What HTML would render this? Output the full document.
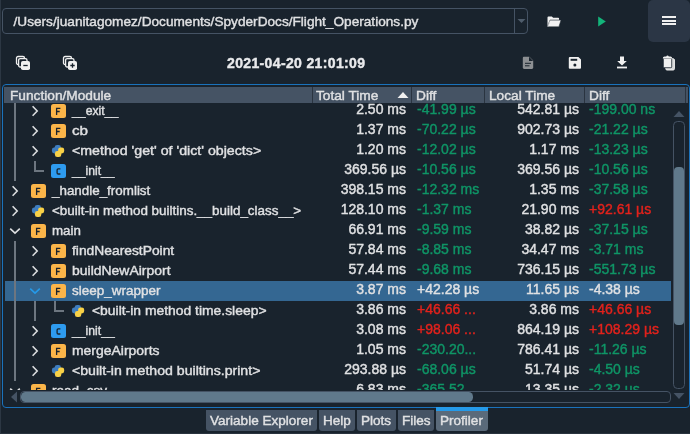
<!DOCTYPE html>
<html><head><meta charset="utf-8">
<style>
html,body{margin:0;padding:0;}
body{width:690px;height:434px;overflow:hidden;background:#19232d;position:relative;font-family:"Liberation Sans",sans-serif;color:#e0e1e3;will-change:transform;-webkit-text-stroke:0.4px currentColor;}
.a{position:absolute;}
.ic{position:absolute;}
.ib{position:absolute;width:15px;height:14px;border-radius:2.5px;}
.ib svg{position:absolute;left:0;top:0;}
.t{position:absolute;height:20px;line-height:16px;white-space:nowrap;font-size:13.4px;}
.num{font-size:14px;}
.gr{color:#0f9566;}
.rd{color:#e2221c;}
.wh{color:#e0e1e3;}
.tl{position:absolute;background:#6d7680;}
.sel{position:absolute;left:5px;width:666px;height:20px;background:#346792;}
#body{position:absolute;left:4px;top:103px;width:667px;height:287px;overflow:hidden;}
#inner{position:absolute;left:-4px;top:-103px;width:690px;height:434px;}
.hd{position:absolute;top:87px;height:16px;background:#455364;}
.hsep{position:absolute;top:87px;width:1px;height:16px;background:#2a3440;}
.ht{position:absolute;top:88px;line-height:16px;font-size:13.7px;color:#e0e1e3;white-space:nowrap;}
.tab{position:absolute;top:410px;height:20.5px;background:#455364;border-radius:0 0 3px 3px;font-size:13.55px;line-height:21px;color:#e0e1e3;white-space:nowrap;}
</style></head>
<body>
<!-- left strip -->
<div class="a" style="left:0;top:0;width:1px;height:434px;background:#2c3743"></div>

<!-- path combobox -->
<div class="a" style="left:2px;top:8px;width:524px;height:24px;border:1px solid #455364;border-radius:4px;"></div>
<div class="a" style="left:514px;top:9px;width:1px;height:24px;background:#455364"></div>
<svg class="ic" style="left:517px;top:18px" width="9" height="6" viewBox="0 0 9 6"><path d="M0.5 1 H8.5 L4.5 5Z" fill="#4f5d6c"/></svg>
<div class="a" style="left:13.5px;top:13px;font-size:13.65px;line-height:18px;white-space:nowrap;color:#e0e1e3">/Users/juanitagomez/Documents/SpyderDocs/Flight_Operations.py</div>

<!-- folder icon -->
<svg class="ic" style="left:546.3px;top:14.6px" width="16" height="13" viewBox="0 0 16 13">
<path d="M1.5 2.4 Q1.5 1.4 2.5 1.4 H5.8 L7.2 2.8 H12.2 Q13.1 2.8 13.1 3.7 V11.7 H2.5 Q1.5 11.7 1.5 10.7Z" fill="#f2f2f2"/>
<path d="M4 5.1 H15.1 L12.9 11.7 H1.5Z" fill="#f2f2f2" stroke="#19232d" stroke-width="0.6" stroke-linejoin="round"/>
<path d="M1.9 11.7 L4.2 5.6" stroke="#f2f2f2" stroke-width="0.6"/>
</svg>
<!-- play icon -->
<svg class="ic" style="left:597px;top:16px" width="10" height="11" viewBox="0 0 10 11"><path d="M1.2 0.5 L8.8 5.5 L1.2 10.5Z" fill="#13b47a"/></svg>
<!-- menu button -->
<div class="a" style="left:648px;top:0px;width:41.5px;height:42px;background:#2b3645;border-radius:5px"></div>
<div class="a" style="left:662px;top:16px;width:14px;height:2px;background:#f0f0f0"></div>
<div class="a" style="left:662px;top:19.5px;width:14px;height:2px;background:#f0f0f0"></div>
<div class="a" style="left:662px;top:23px;width:14px;height:2px;background:#f0f0f0"></div>

<!-- second toolbar -->
<svg class="ic" style="left:15px;top:55px" width="16" height="16" viewBox="0 0 16 16">
<rect x="1.5" y="1.5" width="8" height="8" rx="1.6" fill="none" stroke="#f0f0f0" stroke-width="1.3"/>
<rect x="3.6" y="3.6" width="8.4" height="8.4" rx="1.6" fill="#19232d" stroke="#f0f0f0" stroke-width="1.3"/>
<rect x="6" y="6" width="9" height="9" rx="1.8" fill="#f0f0f0"/>
<path d="M8.3 10.5 H12.7" stroke="#19232d" stroke-width="1.3"/>
</svg>
<svg class="ic" style="left:62px;top:55px" width="16" height="16" viewBox="0 0 16 16">
<rect x="1.5" y="1.5" width="8" height="8" rx="1.6" fill="none" stroke="#f0f0f0" stroke-width="1.3"/>
<rect x="3.6" y="3.6" width="8.4" height="8.4" rx="1.6" fill="#19232d" stroke="#f0f0f0" stroke-width="1.3"/>
<rect x="6" y="6" width="9" height="9" rx="1.8" fill="#f0f0f0"/>
<path d="M8.3 10.5 H12.7 M10.5 8.3 V12.7" stroke="#19232d" stroke-width="1.3"/>
</svg>
<div class="a" style="left:227px;top:54px;font-size:14px;font-weight:bold;line-height:18px;letter-spacing:0.36px;white-space:nowrap;color:#e9eaec">2021-04-20 21:01:09</div>

<!-- doc icon -->
<svg class="ic" style="left:522px;top:56px" width="12" height="14" viewBox="0 0 12 14">
<path d="M1.8 0.8 H7.4 L11.2 4.6 V11.6 Q11.2 12.9 9.9 12.9 H2.1 Q0.8 12.9 0.8 11.6 V2.1 Q0.8 0.8 1.8 0.8Z" fill="#8c8f92"/>
<path d="M7 0.8 V5 H11.2" fill="#19232d"/>
<path d="M3 7.3 H9 M3 9.8 H7.5" stroke="#19232d" stroke-width="1"/>
</svg>
<!-- save icon -->
<svg class="ic" style="left:568px;top:56px" width="14" height="14" viewBox="0 0 14 14">
<path d="M1.8 1 H10.4 L13 3.6 V11.8 Q13 12.8 12 12.8 H1.8 Q0.8 12.8 0.8 11.8 V2 Q0.8 1 1.8 1Z" fill="#f0f0f0"/>
<rect x="2.6" y="2.8" width="6.6" height="2" fill="#19232d"/>
<circle cx="6.9" cy="9" r="1.5" fill="#19232d"/>
</svg>
<!-- download icon -->
<svg class="ic" style="left:616px;top:56px" width="12" height="13" viewBox="0 0 12 13">
<path d="M4 0.5 H8 V5 H10.8 L6 9.6 L1.2 5 H4Z" fill="#f0f0f0"/>
<rect x="1" y="10.6" width="10" height="1.8" fill="#f0f0f0"/>
</svg>
<!-- copy/trash icon -->
<svg class="ic" style="left:662px;top:55px" width="14" height="16" viewBox="0 0 14 16">
<rect x="3.8" y="3.8" width="8.6" height="11.2" rx="1.2" fill="#d6d7d8" stroke="#f0f0f0" stroke-width="1"/>
<rect x="1.3" y="3.3" width="8.4" height="9.4" rx="0.8" fill="#f0f0f0" stroke="#19232d" stroke-width="0.8"/>
<path d="M0.8 3.4 Q0.8 1.5 2.6 1.5 H4.2 Q4.6 0.6 5.5 0.6 Q6.4 0.6 6.8 1.5 H8.4 Q10.2 1.5 10.2 3.4Z" fill="#f0f0f0"/>
</svg>

<!-- table frame -->
<div class="a" style="left:2px;top:84px;width:686px;height:322px;border:1px solid #1a72bb;border-radius:4px"></div>
<!-- header -->
<div class="hd" style="left:4px;width:684px"></div>
<div class="hsep" style="left:312px"></div>
<div class="hsep" style="left:411px"></div>
<div class="hsep" style="left:484px"></div>
<div class="hsep" style="left:584px"></div>
<div class="hsep" style="left:685px"></div>
<div class="ht" style="left:10px">Function/Module</div>
<div class="ht" style="left:316px">Total Time</div>
<div class="ht" style="left:416px">Diff</div>
<div class="ht" style="left:489px">Local Time</div>
<div class="ht" style="left:589px">Diff</div>
<svg class="ic" style="left:397px;top:91px" width="12" height="8" viewBox="0 0 12 8"><path d="M0.5 7 L6 1 L11.5 7Z" fill="#f0f0f0"/></svg>

<!-- body -->
<div id="body"><div id="inner">
<svg class="ic" style="left:31px;top:105px" width="8" height="12" viewBox="0 0 8 12"><path d="M1.6 1.2 L6.2 6 L1.6 10.8" fill="none" stroke="#dcdee0" stroke-width="1.6"/></svg>
<div class="ib" style="left:51px;top:104px;background:#fbb549"><svg width="15" height="14" viewBox="0 0 15 14"><path d="M5.6 10.9 V4.3 H9.4 M5.6 7.5 H8.7" fill="none" stroke="#19232d" stroke-width="1.3"/></svg></div>
<div class="t nm" style="left:72px;top:101px;line-height:19px;transform:scaleX(0.9163);transform-origin:0 0">__exit__</div>
<div class="t num r" style="right:284px;top:101px">2.50 ms</div>
<div class="t num gr" style="left:417px;top:101px">-41.99 µs</div>
<div class="t num r" style="right:111px;top:101px">542.81 µs</div>
<div class="t num gr" style="left:589px;top:101px">-199.00 ns</div>
<svg class="ic" style="left:31px;top:125px" width="8" height="12" viewBox="0 0 8 12"><path d="M1.6 1.2 L6.2 6 L1.6 10.8" fill="none" stroke="#dcdee0" stroke-width="1.6"/></svg>
<div class="ib" style="left:51px;top:124px;background:#fbb549"><svg width="15" height="14" viewBox="0 0 15 14"><path d="M5.6 10.9 V4.3 H9.4 M5.6 7.5 H8.7" fill="none" stroke="#19232d" stroke-width="1.3"/></svg></div>
<div class="t nm" style="left:72px;top:121px;line-height:19px;transform:scaleX(1.137);transform-origin:0 0">cb</div>
<div class="t num r" style="right:284px;top:121px">1.37 ms</div>
<div class="t num gr" style="left:417px;top:121px">-70.22 µs</div>
<div class="t num r" style="right:111px;top:121px">902.73 µs</div>
<div class="t num gr" style="left:589px;top:121px">-21.22 µs</div>
<svg class="ic" style="left:31px;top:145px" width="8" height="12" viewBox="0 0 8 12"><path d="M1.6 1.2 L6.2 6 L1.6 10.8" fill="none" stroke="#dcdee0" stroke-width="1.6"/></svg>
<svg class="ic" style="left:51px;top:144px" width="14" height="14" viewBox="0 0 14 14"><rect x="3.7" y="0.9" width="6.2" height="5.9" rx="2.4" fill="#3e7dbf"/><rect x="0.9" y="3.5" width="6.4" height="6" rx="2.4" fill="#3e7dbf"/><rect x="7.1" y="3.4" width="6.1" height="6" rx="2.4" fill="#f8d147"/><rect x="3.9" y="7.1" width="6.4" height="6" rx="2.4" fill="#f8d147"/></svg>
<div class="t nm" style="left:72px;top:141px;line-height:19px;transform:scaleX(1.0601);transform-origin:0 0">&lt;method 'get' of 'dict' objects&gt;</div>
<div class="t num r" style="right:284px;top:141px">1.20 ms</div>
<div class="t num gr" style="left:417px;top:141px">-12.02 µs</div>
<div class="t num r" style="right:111px;top:141px">1.17 ms</div>
<div class="t num gr" style="left:589px;top:141px">-13.23 µs</div>
<div class="tl" style="left:34px;top:161px;width:1.5px;height:10px"></div>
<div class="tl" style="left:34px;top:170px;width:10px;height:1.5px"></div>
<div class="ib" style="left:51px;top:164px;background:#2e9bef"><svg width="15" height="14" viewBox="0 0 15 14"><path d="M9.4 4.8 H7.2 Q6.1 4.8 6.1 5.9 V8.9 Q6.1 10 7.2 10 H9.4" fill="none" stroke="#19232d" stroke-width="1.3"/></svg></div>
<div class="t nm" style="left:72px;top:161px;line-height:19px;transform:scaleX(0.9079);transform-origin:0 0">__init__</div>
<div class="t num r" style="right:284px;top:161px">369.56 µs</div>
<div class="t num gr" style="left:417px;top:161px">-10.56 µs</div>
<div class="t num r" style="right:111px;top:161px">369.56 µs</div>
<div class="t num gr" style="left:589px;top:161px">-10.56 µs</div>
<svg class="ic" style="left:11px;top:185px" width="8" height="12" viewBox="0 0 8 12"><path d="M1.6 1.2 L6.2 6 L1.6 10.8" fill="none" stroke="#dcdee0" stroke-width="1.6"/></svg>
<div class="ib" style="left:31px;top:184px;background:#fbb549"><svg width="15" height="14" viewBox="0 0 15 14"><path d="M5.6 10.9 V4.3 H9.4 M5.6 7.5 H8.7" fill="none" stroke="#19232d" stroke-width="1.3"/></svg></div>
<div class="t nm" style="left:52px;top:181px;line-height:19px;transform:scaleX(1.0003);transform-origin:0 0">_handle_fromlist</div>
<div class="t num r" style="right:284px;top:181px">398.15 ms</div>
<div class="t num gr" style="left:417px;top:181px">-12.32 ms</div>
<div class="t num r" style="right:111px;top:181px">1.35 ms</div>
<div class="t num gr" style="left:589px;top:181px">-37.58 µs</div>
<svg class="ic" style="left:11px;top:205px" width="8" height="12" viewBox="0 0 8 12"><path d="M1.6 1.2 L6.2 6 L1.6 10.8" fill="none" stroke="#dcdee0" stroke-width="1.6"/></svg>
<svg class="ic" style="left:31px;top:204px" width="14" height="14" viewBox="0 0 14 14"><rect x="3.7" y="0.9" width="6.2" height="5.9" rx="2.4" fill="#3e7dbf"/><rect x="0.9" y="3.5" width="6.4" height="6" rx="2.4" fill="#3e7dbf"/><rect x="7.1" y="3.4" width="6.1" height="6" rx="2.4" fill="#f8d147"/><rect x="3.9" y="7.1" width="6.4" height="6" rx="2.4" fill="#f8d147"/></svg>
<div class="t nm" style="left:52px;top:201px;line-height:19px;transform:scaleX(1.0023);transform-origin:0 0">&lt;built-in method builtins.__build_class__&gt;</div>
<div class="t num r" style="right:284px;top:201px">128.10 ms</div>
<div class="t num gr" style="left:417px;top:201px">-1.37 ms</div>
<div class="t num r" style="right:111px;top:201px">21.90 ms</div>
<div class="t num rd" style="left:589px;top:201px">+92.61 µs</div>
<svg class="ic" style="left:9px;top:227px" width="12" height="8" viewBox="0 0 12 8"><path d="M1.2 1.6 L6 6.2 L10.8 1.6" fill="none" stroke="#dcdee0" stroke-width="1.6"/></svg>
<div class="ib" style="left:31px;top:224px;background:#fbb549"><svg width="15" height="14" viewBox="0 0 15 14"><path d="M5.6 10.9 V4.3 H9.4 M5.6 7.5 H8.7" fill="none" stroke="#19232d" stroke-width="1.3"/></svg></div>
<div class="t nm" style="left:52px;top:221px;line-height:19px;transform:scaleX(0.9955);transform-origin:0 0">main</div>
<div class="t num r" style="right:284px;top:221px">66.91 ms</div>
<div class="t num gr" style="left:417px;top:221px">-9.59 ms</div>
<div class="t num r" style="right:111px;top:221px">38.82 µs</div>
<div class="t num gr" style="left:589px;top:221px">-37.15 µs</div>
<svg class="ic" style="left:31px;top:245px" width="8" height="12" viewBox="0 0 8 12"><path d="M1.6 1.2 L6.2 6 L1.6 10.8" fill="none" stroke="#dcdee0" stroke-width="1.6"/></svg>
<div class="ib" style="left:51px;top:244px;background:#fbb549"><svg width="15" height="14" viewBox="0 0 15 14"><path d="M5.6 10.9 V4.3 H9.4 M5.6 7.5 H8.7" fill="none" stroke="#19232d" stroke-width="1.3"/></svg></div>
<div class="t nm" style="left:72px;top:241px;line-height:19px;transform:scaleX(1.0323);transform-origin:0 0">findNearestPoint</div>
<div class="t num r" style="right:284px;top:241px">57.84 ms</div>
<div class="t num gr" style="left:417px;top:241px">-8.85 ms</div>
<div class="t num r" style="right:111px;top:241px">34.47 ms</div>
<div class="t num gr" style="left:589px;top:241px">-3.71 ms</div>
<svg class="ic" style="left:31px;top:265px" width="8" height="12" viewBox="0 0 8 12"><path d="M1.6 1.2 L6.2 6 L1.6 10.8" fill="none" stroke="#dcdee0" stroke-width="1.6"/></svg>
<div class="ib" style="left:51px;top:264px;background:#fbb549"><svg width="15" height="14" viewBox="0 0 15 14"><path d="M5.6 10.9 V4.3 H9.4 M5.6 7.5 H8.7" fill="none" stroke="#19232d" stroke-width="1.3"/></svg></div>
<div class="t nm" style="left:72px;top:261px;line-height:19px;transform:scaleX(1.0431);transform-origin:0 0">buildNewAirport</div>
<div class="t num r" style="right:284px;top:261px">57.44 ms</div>
<div class="t num gr" style="left:417px;top:261px">-9.68 ms</div>
<div class="t num r" style="right:111px;top:261px">736.15 µs</div>
<div class="t num gr" style="left:589px;top:261px">-551.73 µs</div>
<div class="sel" style="top:281px"></div>
<svg class="ic" style="left:29px;top:287px" width="12" height="8" viewBox="0 0 12 8"><path d="M1.2 1.6 L6 6.2 L10.8 1.6" fill="none" stroke="#259ae9" stroke-width="1.6"/></svg>
<div class="ib" style="left:51px;top:284px;background:#fbb549"><svg width="15" height="14" viewBox="0 0 15 14"><path d="M5.6 10.9 V4.3 H9.4 M5.6 7.5 H8.7" fill="none" stroke="#19232d" stroke-width="1.3"/></svg></div>
<div class="t nm" style="left:72px;top:281px;line-height:19px;transform:scaleX(1.0064);transform-origin:0 0">sleep_wrapper</div>
<div class="t num r" style="right:284px;top:281px">3.87 ms</div>
<div class="t num wh" style="left:417px;top:281px">+42.28 µs</div>
<div class="t num r" style="right:111px;top:281px">11.65 µs</div>
<div class="t num wh" style="left:589px;top:281px">-4.38 µs</div>
<div class="tl" style="left:54px;top:301px;width:1.5px;height:10px"></div>
<div class="tl" style="left:54px;top:310px;width:10px;height:1.5px"></div>
<svg class="ic" style="left:71px;top:304px" width="14" height="14" viewBox="0 0 14 14"><rect x="3.7" y="0.9" width="6.2" height="5.9" rx="2.4" fill="#3e7dbf"/><rect x="0.9" y="3.5" width="6.4" height="6" rx="2.4" fill="#3e7dbf"/><rect x="7.1" y="3.4" width="6.1" height="6" rx="2.4" fill="#f8d147"/><rect x="3.9" y="7.1" width="6.4" height="6" rx="2.4" fill="#f8d147"/></svg>
<div class="t nm" style="left:92px;top:301px;line-height:19px;transform:scaleX(1.0373);transform-origin:0 0">&lt;built-in method time.sleep&gt;</div>
<div class="t num r" style="right:284px;top:301px">3.86 ms</div>
<div class="t num rd" style="left:417px;top:301px">+46.66 ...</div>
<div class="t num r" style="right:111px;top:301px">3.86 ms</div>
<div class="t num rd" style="left:589px;top:301px">+46.66 µs</div>
<svg class="ic" style="left:31px;top:325px" width="8" height="12" viewBox="0 0 8 12"><path d="M1.6 1.2 L6.2 6 L1.6 10.8" fill="none" stroke="#dcdee0" stroke-width="1.6"/></svg>
<div class="ib" style="left:51px;top:324px;background:#2e9bef"><svg width="15" height="14" viewBox="0 0 15 14"><path d="M9.4 4.8 H7.2 Q6.1 4.8 6.1 5.9 V8.9 Q6.1 10 7.2 10 H9.4" fill="none" stroke="#19232d" stroke-width="1.3"/></svg></div>
<div class="t nm" style="left:72px;top:321px;line-height:19px;transform:scaleX(0.9101);transform-origin:0 0">__init__</div>
<div class="t num r" style="right:284px;top:321px">3.08 ms</div>
<div class="t num rd" style="left:417px;top:321px">+98.06 ...</div>
<div class="t num r" style="right:111px;top:321px">864.19 µs</div>
<div class="t num rd" style="left:589px;top:321px">+108.29 µs</div>
<svg class="ic" style="left:31px;top:345px" width="8" height="12" viewBox="0 0 8 12"><path d="M1.6 1.2 L6.2 6 L1.6 10.8" fill="none" stroke="#dcdee0" stroke-width="1.6"/></svg>
<div class="ib" style="left:51px;top:344px;background:#fbb549"><svg width="15" height="14" viewBox="0 0 15 14"><path d="M5.6 10.9 V4.3 H9.4 M5.6 7.5 H8.7" fill="none" stroke="#19232d" stroke-width="1.3"/></svg></div>
<div class="t nm" style="left:72px;top:341px;line-height:19px;transform:scaleX(1.0406);transform-origin:0 0">mergeAirports</div>
<div class="t num r" style="right:284px;top:341px">1.05 ms</div>
<div class="t num gr" style="left:417px;top:341px">-230.20...</div>
<div class="t num r" style="right:111px;top:341px">786.41 µs</div>
<div class="t num gr" style="left:589px;top:341px">-11.26 µs</div>
<svg class="ic" style="left:31px;top:365px" width="8" height="12" viewBox="0 0 8 12"><path d="M1.6 1.2 L6.2 6 L1.6 10.8" fill="none" stroke="#dcdee0" stroke-width="1.6"/></svg>
<svg class="ic" style="left:51px;top:364px" width="14" height="14" viewBox="0 0 14 14"><rect x="3.7" y="0.9" width="6.2" height="5.9" rx="2.4" fill="#3e7dbf"/><rect x="0.9" y="3.5" width="6.4" height="6" rx="2.4" fill="#3e7dbf"/><rect x="7.1" y="3.4" width="6.1" height="6" rx="2.4" fill="#f8d147"/><rect x="3.9" y="7.1" width="6.4" height="6" rx="2.4" fill="#f8d147"/></svg>
<div class="t nm" style="left:72px;top:361px;line-height:19px;transform:scaleX(1.0545);transform-origin:0 0">&lt;built-in method builtins.print&gt;</div>
<div class="t num r" style="right:284px;top:361px">293.88 µs</div>
<div class="t num gr" style="left:417px;top:361px">-68.06 µs</div>
<div class="t num r" style="right:111px;top:361px">51.74 µs</div>
<div class="t num gr" style="left:589px;top:361px">-4.50 µs</div>
<svg class="ic" style="left:9px;top:387px" width="12" height="8" viewBox="0 0 12 8"><path d="M1.2 1.6 L6 6.2 L10.8 1.6" fill="none" stroke="#dcdee0" stroke-width="1.6"/></svg>
<div class="ib" style="left:31px;top:384px;background:#fbb549"><svg width="15" height="14" viewBox="0 0 15 14"><path d="M5.6 10.9 V4.3 H9.4 M5.6 7.5 H8.7" fill="none" stroke="#19232d" stroke-width="1.3"/></svg></div>
<div class="t nm" style="left:52px;top:381px;line-height:19px;transform:scaleX(1.0121);transform-origin:0 0">read_csv</div>
<div class="t num r" style="right:284px;top:381px">6.83 ms</div>
<div class="t num gr" style="left:417px;top:381px">-365.52 ...</div>
<div class="t num r" style="right:111px;top:381px">13.35 µs</div>
<div class="t num gr" style="left:589px;top:381px">-2.32 µs</div>
<div class="tl" style="left:14px;top:101px;width:1.5px;height:80px"></div>
<div class="tl" style="left:14px;top:241px;width:1.5px;height:140px"></div>
<div class="tl" style="left:34px;top:301px;width:1.5px;height:20px"></div>
</div></div>

<!-- vertical scrollbar -->
<svg class="ic" style="left:673px;top:110px" width="12" height="8" viewBox="0 0 12 8"><path d="M0.5 7 L6 1 L11.5 7Z" fill="#455364"/></svg>
<div class="a" style="left:673px;top:121px;width:10px;height:266px;border:1px solid #455364;border-radius:4.5px"></div>
<div class="a" style="left:674px;top:167px;width:10px;height:158px;background:#60798b;border-radius:4px"></div>
<svg class="ic" style="left:673px;top:392px" width="12" height="8" viewBox="0 0 12 8"><path d="M0.5 1 L6 7 L11.5 1Z" fill="#455364"/></svg>

<!-- horizontal scrollbar -->
<svg class="ic" style="left:10px;top:391px" width="8" height="12" viewBox="0 0 8 12"><path d="M7 0.5 L1 6 L7 11.5Z" fill="#455364"/></svg>
<div class="a" style="left:20px;top:391px;width:649px;height:10px;border:1px solid #455364;border-radius:4px"></div>
<div class="a" style="left:21px;top:392px;width:452px;height:9.5px;background:#60798b;border-radius:4.5px"></div>

<!-- tabs -->
<div class="tab" style="left:206px;width:111px;"><span style="position:absolute;left:4px">Variable Explorer</span></div>
<div class="tab" style="left:319px;width:36px;"><span style="position:absolute;left:4px">Help</span></div>
<div class="tab" style="left:357px;width:39px;"><span style="position:absolute;left:4px">Plots</span></div>
<div class="tab" style="left:398px;width:36px;"><span style="position:absolute;left:4px">Files</span></div>
<div class="tab" style="left:436px;width:52px;background:#5a6a7a;"><span style="position:absolute;left:4px">Profiler</span></div>
<div class="a" style="left:436px;top:407px;width:52px;height:4px;background:#259ae9"></div>
<div class="a" style="left:0;top:433px;width:690px;height:1px;background:#29333e"></div>
</body></html>
